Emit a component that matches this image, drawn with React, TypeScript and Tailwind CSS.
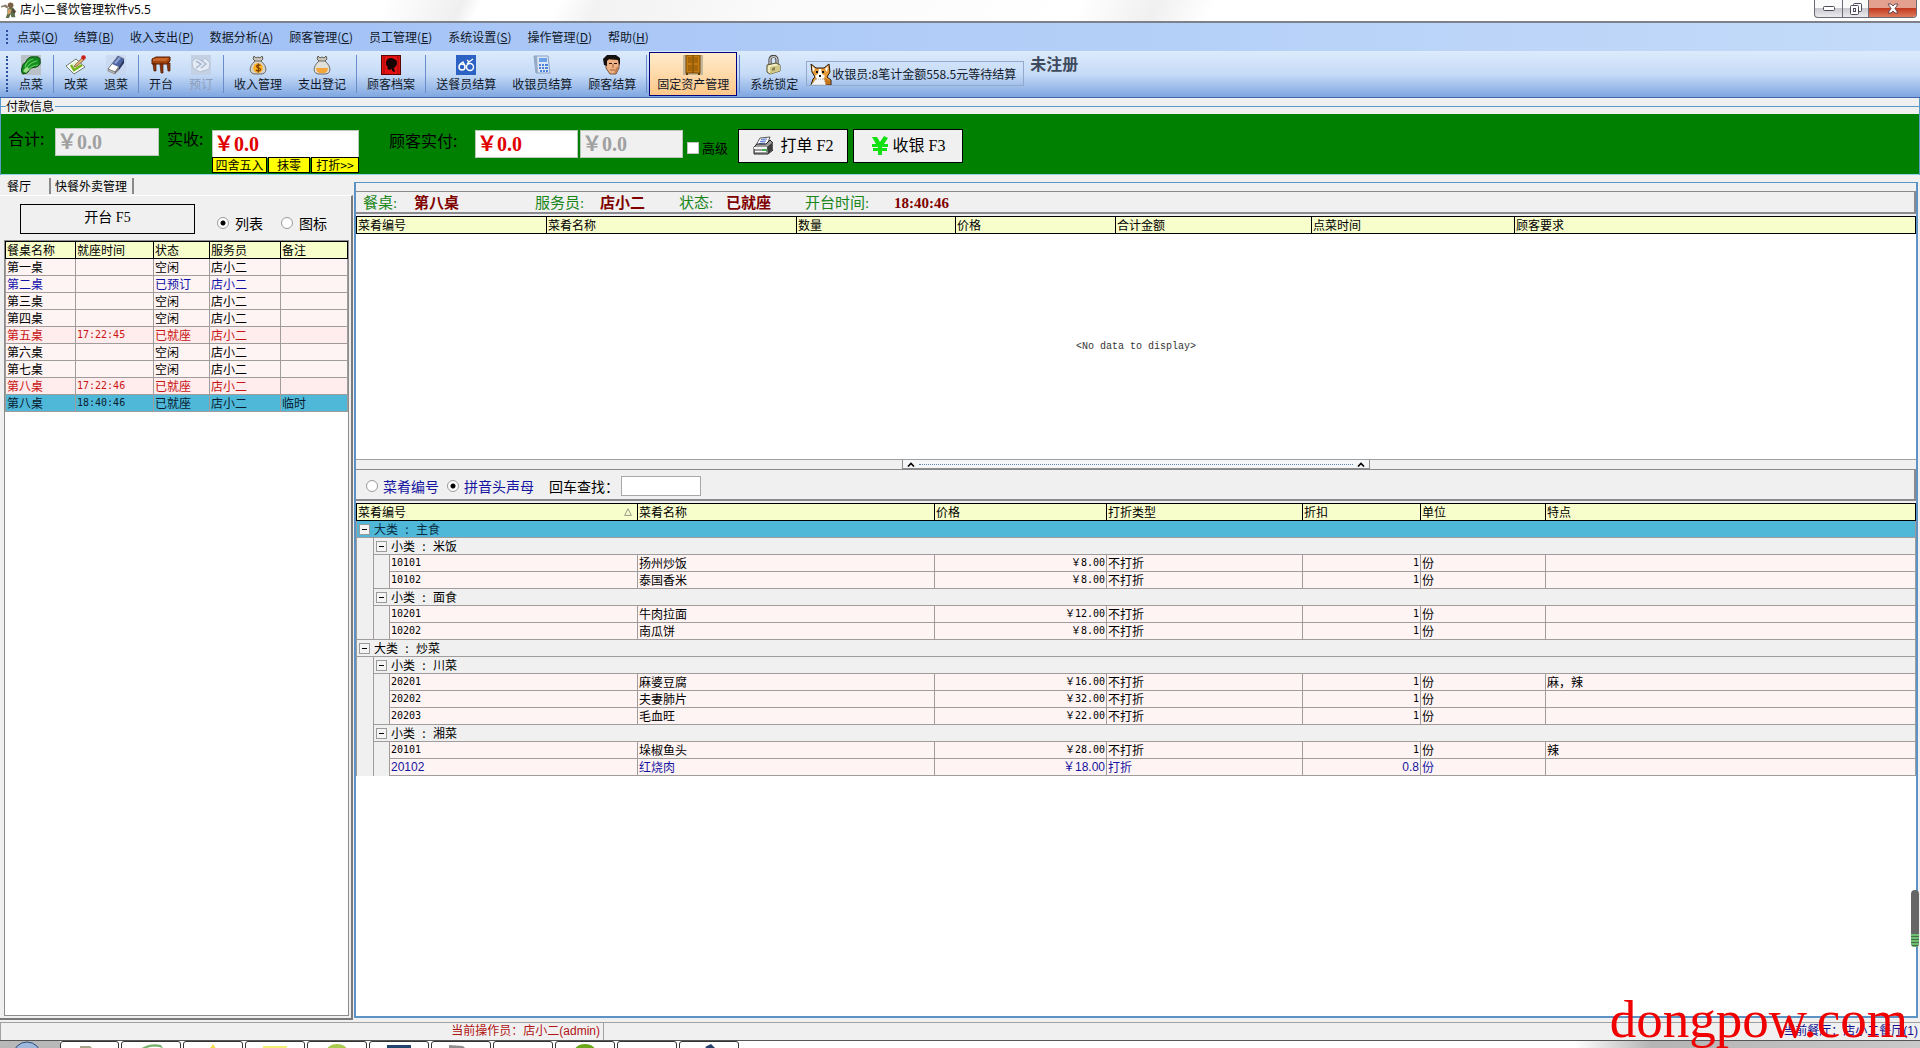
import React from 'react';
import clsx from 'clsx';

/* ---------- icons ---------- */

const Icon = ({ children, size = 20 }: { children: React.ReactNode; size?: number }) => (
  <svg width={size} height={size} viewBox="0 0 20 20" className="block shrink-0" aria-hidden="true">
    {children}
  </svg>
);

const WaiterIcon = () => (
  <Icon size={16}>
    <path d="M0 5l6-2 3 3-1 2-4-2-4 1z" fill="#8a7d6c" />
    <circle cx="12" cy="4" r="3.5" fill="#7a6046" />
    <path d="M8 8l7-1 4 5-2 2 1 5h-5l-1-4-2 5H6l2-6z" fill="#5c6f4a" />
    <path d="M9 9l4 0-1 5-4 2z" fill="#d7a06a" />
    <path d="M14 8l4 4-1 3-3-3z" fill="#574334" />
  </Icon>
);

const VegetableIcon = () => (
  <Icon>
    <rect width="20" height="20" fill="#b9c1c7" />
    <path d="M1 13c0-3 2-5 4-6 1-4 5-6 8-5 4-1 7 1 6 4 1 3-1 5-4 6l-5 1-4 5-4 1-2-3z" fill="#178a22" stroke="#07450d" />
    <path d="M4 12c1-4 4-7 8-8M6 13c2-4 5-6 10-7M8 14c3-3 6-4 9-4" stroke="#5ed45a" strokeWidth="1.2" fill="none" />
    <path d="M5 12l4 2-4 4-3-2z" fill="#9fe08a" />
  </Icon>
);

const EditIcon = () => (
  <Icon>
    <path d="M0 11l10-7 9 8-11 7z" fill="#fff" stroke="#6b7a6b" />
    <path d="M3 11l7-5 6 6-8 5z" fill="#e4f3d0" />
    <path d="M5 10l3 5 8-5" stroke="#76b41a" strokeWidth="2.4" fill="none" />
    <path d="M9 10l7-7 2 2-7 6-3 1z" fill="#e0b078" stroke="#76502c" strokeWidth=".7" />
    <circle cx="17.500" cy="2.500" r="2.300" fill="#c8241c" />
  </Icon>
);

const EraserIcon = () => (
  <Icon>
    <rect width="20" height="20" fill="#c5d4ec" opacity=".6" />
    <path d="M2 14L12 1l6 3-9 13z" fill="#fff" stroke="#555" strokeWidth=".8" />
    <path d="M6 9l6-8 6 3-5 8z" fill="#4c63a0" />
    <path d="M8 8l5-6 2 1-5 6z" fill="#8ea3d4" />
    <path d="M13 12l5-8v4l-5 7z" fill="#26345f" />
    <path d="M9 17l4-5v3l-4 4z" fill="#777" />
    <path d="M2 14l7 3v2l-7-3z" fill="#bbb" stroke="#666" strokeWidth=".5" />
  </Icon>
);

const TableIcon = () => (
  <Icon>
    <path d="M1 4l4-2h14v4l-3 3H1z" fill="#a2420f" stroke="#5b1f05" />
    <path d="M2 4l4-1h12l-3 3H2z" fill="#c9672a" />
    <path d="M2 9h3v7H3zM9 9h3v9h-2zM16 8h3v8h-2z" fill="#8b330a" stroke="#501a03" strokeWidth=".7" />
  </Icon>
);

const BookIcon = () => (
  <Icon>
    <rect width="20" height="20" fill="#c4d1e4" />
    <path d="M1 7l4-4 6 3 3-3 5 5-1 6-9 3-7-4z" fill="#e4ebf5" stroke="#b4bfd0" />
    <path d="M5 6l5 3-5 4M10 5l5 4-5 4" stroke="#aab8cf" fill="none" strokeWidth="1.5" />
  </Icon>
);

const IncomeIcon = () => (
  <Icon>
    <path d="M6 1l2 2 2-1 2 1 2-2 1 3-3 3H8L5 4z" fill="#ccc8bd" stroke="#5f5b52" />
    <path d="M7 6h6c7 6 6 13 0 13H7C1 19 0 12 7 6z" fill="#d5d2c8" stroke="#6b675e" />
    <circle cx="10" cy="13" r="4.8" fill="#ffae1c" />
    <path d="M12.5 10.5c-1-1-4-1-4 .8 0 2 4 1.200 4 3.200 0 1.800-3.500 1.700-4.500.5M10.300 8.500v9" stroke="#7c4300" strokeWidth="1.200" fill="none" />
  </Icon>
);

const ExpenseIcon = () => (
  <Icon>
    <path d="M6 1l2 2 2-1 2 1 2-2 1 3-3 3H8L5 4z" fill="#ccc8bd" stroke="#5f5b52" />
    <path d="M7 6h6c7 6 6 13 0 13H7C1 19 0 12 7 6z" fill="#e0e0da" stroke="#6b675e" />
    <path d="M4 13h12c0 3-2 5-4 5H8c-2 0-4-2-4-5z" fill="#f5a63a" />
  </Icon>
);

const ProfileIcon = () => (
  <Icon>
    <rect x=".5" y=".5" width="19" height="19" fill="#e21212" stroke="#5c0505" />
    <path d="M5 7c1-4 5-5 8-3 3 1 4 4 2 7l-2 2 1 4-3-1v-2l-3 1-2-2 1-1-2-2z" fill="#160404" />
    <path d="M3 1v18M17 1v18" stroke="#a00b0b" />
  </Icon>
);

const BikeIcon = () => (
  <Icon>
    <rect width="20" height="20" fill="#2c62c4" />
    <circle cx="6" cy="12" r="3" fill="none" stroke="#fff" strokeWidth="1.500" />
    <circle cx="14" cy="12" r="3.500" fill="none" stroke="#fff" strokeWidth="1.500" />
    <path d="M4 9l3-2 2 4M11 5l2 2 4-3M11 9l3-3" stroke="#fff" strokeWidth="1.300" fill="none" />
  </Icon>
);

const CalculatorIcon = () => (
  <Icon>
    <path d="M2 1h14l2 17H4z" fill="#dbe7f5" stroke="#8aa2c4" />
    <path d="M2 1l2 17h2L5 1z" fill="#96aac6" />
    <path d="M7 3h8v4H7z" fill="#6ea0e6" />
    <path d="M7 9h2v2H7zM10 9h2v2h-2zM13 9h3v2h-3zM7 12h2v2H7zM10 12h2v2h-2zM13 12h3v2h-3zM8 15h2v2H8zM11 15h2v2h-2zM14 15h2v2h-2z" fill="#4f84d8" />
  </Icon>
);

const ManIcon = () => (
  <Icon>
    <path d="M4 4h13v9l-3 6H8l-4-6z" fill="#eeb183" stroke="#5a3217" strokeWidth=".8" />
    <path d="M2 10L1 4l4-4h9l4 3v7l-1-1-1-4-9-1-2 2v5z" fill="#141010" />
    <path d="M7 8h3v1H7zM12 8h3v1h-3z" fill="#2b150a" />
    <path d="M11 9v4M8 15h5" stroke="#a35e36" fill="none" />
    <path d="M14 13l3-2-2 6-3 2z" fill="#c47f50" />
  </Icon>
);

const CabinetIcon = () => (
  <Icon>
    <rect width="20" height="20" fill="#c4b79c" />
    <rect x="3" y="0" width="14" height="18" fill="#c07a10" stroke="#7a4a06" />
    <path d="M5 2h4v6H5zM11 2h4v6h-4zM5 10h4v6H5zM11 10h4v6h-4z" fill="#a8660a" />
    <path d="M10 0v18" stroke="#6a3f04" />
    <path d="M3 18h2v2H3zM15 18h2v2h-2z" fill="#6a3f04" />
  </Icon>
);

const LockIcon = () => (
  <Icon>
    <path d="M6 11V5c0-5 7-5 7 0v5" stroke="#444" strokeWidth="3.200" fill="none" />
    <path d="M6 11V5c0-4.500 7-4.500 7 0v5" stroke="#cfcfcf" strokeWidth="1.300" fill="none" />
    <path d="M3 10l9-2 4 2v6l-10 3-3-2z" fill="#f0ebc0" stroke="#55502c" />
    <path d="M6 12l10-2v6L6 19z" fill="#d2c988" />
    <path d="M8 13l3-1v3l-3 1z" fill="#8a8250" />
  </Icon>
);

const CorgiIcon = () => (
  <svg width="22" height="22" viewBox="0 0 22 22" className="block shrink-0" aria-hidden="true">
    <path d="M1 1l5 4h8l5-4 1 8-3 5 4 3v5H1l2-6 2-2-3-5z" fill="#e59a3a" stroke="#2a1a0a" />
    <path d="M2 3l3 3-2 3zM18 3l-3 3 2 3z" fill="#fff" />
    <path d="M9 6h2l1 5 3 2-2 3H7l-2-3 3-2z" fill="#fff" />
    <path d="M6 8h2v2H6zM12 8h2v2h-2zM9 12h2v2H9z" fill="#111" />
    <path d="M6 16h8l2 6H1z" fill="#f4f4f4" stroke="#666" strokeWidth=".6" strokeDasharray="1 1" />
    <path d="M15 15l5 3v3h-4z" fill="#c4741c" />
  </svg>
);

const PrinterIcon = () => (
  <Icon>
    <path d="M7 2l10-1-3 8H3z" fill="#fff" stroke="#333" strokeWidth=".8" />
    <path d="M8 3.500l6-.5M7 5.500l6-.5M6 7.500l6-.5" stroke="#5576d0" strokeWidth="1.200" />
    <path d="M1 11l3-3h9l4-4 3 3v7l-5 4H1z" fill="#9a9a9a" stroke="#222" />
    <path d="M1 11h13v2H1z" fill="#f4f4f4" />
    <path d="M14 11l5-4v7l-4 4z" fill="#3c3c3c" />
    <path d="M2 15h11v1H2z" fill="#fff" />
    <path d="M9 13h5v2H9z" fill="#3fae4c" />
  </Icon>
);

const YuanIcon = () => (
  <svg width="18" height="20" viewBox="0 0 18 20" className="block shrink-0" aria-hidden="true">
    <path d="M1 1h5l3 5 4-6 4 2-4 6h4v3h-6v1h5v3h-5v4H7v-4H2v-3h5v-1H1V8h4z" fill="#12e012" />
  </svg>
);

/* ---------- data ---------- */

const menus = [
  ['点菜', 'O'],
  ['结算', 'B'],
  ['收入支出', 'P'],
  ['数据分析', 'A'],
  ['顾客管理', 'C'],
  ['员工管理', 'E'],
  ['系统设置', 'S'],
  ['操作管理', 'D'],
  ['帮助', 'H'],
];

type Tool = { label: string; icon: React.ReactNode; disabled?: boolean; active?: boolean };

const toolGroups: Tool[][] = [
  [{ label: '点菜', icon: <VegetableIcon /> }],
  [
    { label: '改菜', icon: <EditIcon /> },
    { label: '退菜', icon: <EraserIcon /> },
  ],
  [
    { label: '开台', icon: <TableIcon /> },
    { label: '预订', icon: <BookIcon />, disabled: true },
  ],
  [
    { label: '收入管理', icon: <IncomeIcon /> },
    { label: '支出登记', icon: <ExpenseIcon /> },
  ],
  [{ label: '顾客档案', icon: <ProfileIcon /> }],
  [
    { label: '送餐员结算', icon: <BikeIcon /> },
    { label: '收银员结算', icon: <CalculatorIcon /> },
    { label: '顾客结算', icon: <ManIcon /> },
  ],
  [{ label: '固定资产管理', icon: <CabinetIcon />, active: true }],
  [{ label: '系统锁定', icon: <LockIcon /> }],
];

type Seat = { name: string; time?: string; state: string; note?: string; tone?: 'booked' | 'busy' | 'selected' };

const seats: Seat[] = [
  { name: '第一桌', state: '空闲' },
  { name: '第二桌', state: '已预订', tone: 'booked' },
  { name: '第三桌', state: '空闲' },
  { name: '第四桌', state: '空闲' },
  { name: '第五桌', time: '17:22:45', state: '已就座', tone: 'busy' },
  { name: '第六桌', state: '空闲' },
  { name: '第七桌', state: '空闲' },
  { name: '第八桌', time: '17:22:46', state: '已就座', tone: 'busy' },
  { name: '第八桌', time: '18:40:46', state: '已就座', note: '临时', tone: 'selected' },
];

type Dish = { id: string; name: string; price: string; kind: string; rate: string; note?: string; discounted?: boolean };
type SubGroup = { name: string; dishes: Dish[] };
type Group = { name: string; selected?: boolean; subs: SubGroup[] };

const groups: Group[] = [
  {
    name: '主食',
    selected: true,
    subs: [
      {
        name: '米饭',
        dishes: [
          { id: '10101', name: '扬州炒饭', price: '￥8.00', kind: '不打折', rate: '1' },
          { id: '10102', name: '泰国香米', price: '￥8.00', kind: '不打折', rate: '1' },
        ],
      },
      {
        name: '面食',
        dishes: [
          { id: '10201', name: '牛肉拉面', price: '￥12.00', kind: '不打折', rate: '1' },
          { id: '10202', name: '南瓜饼', price: '￥8.00', kind: '不打折', rate: '1' },
        ],
      },
    ],
  },
  {
    name: '炒菜',
    subs: [
      {
        name: '川菜',
        dishes: [
          { id: '20201', name: '麻婆豆腐', price: '￥16.00', kind: '不打折', rate: '1', note: '麻，辣' },
          { id: '20202', name: '夫妻肺片', price: '￥32.00', kind: '不打折', rate: '1' },
          { id: '20203', name: '毛血旺', price: '￥22.00', kind: '不打折', rate: '1' },
        ],
      },
      {
        name: '湘菜',
        dishes: [
          { id: '20101', name: '垛椒鱼头', price: '￥28.00', kind: '不打折', rate: '1', note: '辣' },
          { id: '20102', name: '红烧肉', price: '￥18.00', kind: '打折', rate: '0.8', discounted: true },
        ],
      },
    ],
  },
];

/* ---------- small parts ---------- */

const Grip = () => <div className="w-[2px] border-l-2 border-dotted border-[#2a4f9c]" />;

const th = 'h-[17px] border border-black bg-[#f8fdcc] p-0 px-px text-left font-normal leading-4 whitespace-nowrap';
const td = 'h-[17px] border border-[#a09c9c] p-0 px-px leading-4 whitespace-nowrap overflow-hidden';
const mono = "font-['DejaVu_Sans_Mono','Noto_Sans_CJK_SC',monospace] text-[10px]";
const arial = "font-['Liberation_Sans','Noto_Sans_CJK_SC',sans-serif]";
const radio =
  'm-0 size-3 shrink-0 appearance-none rounded-full border border-[#9a9a9a] bg-white checked:bg-[radial-gradient(circle,#000_2px,#fff_3px)]';

const Toggle = ({ label }: { label: string }) => (
  <button
    type="button"
    aria-label={label}
    className="flex size-[11px] items-center justify-center border border-[#9a9a9a] bg-[#f4f4f4]"
  >
    <span className="h-px w-[5px] bg-black" />
  </button>
);

const GroupLabel = ({ kind, name }: { kind: string; name: string }) => (
  <div className="flex items-center pl-px">
    <Toggle label={name} />
    <span className="ml-1">{kind}</span>
    <span className="w-[18px] text-center">:</span>
    <span>{name}</span>
  </div>
);

const MoneyInput = ({ label, readOnly, className }: { label: string; readOnly?: boolean; className: string }) => (
  <input
    aria-label={label}
    defaultValue="￥0.0"
    readOnly={readOnly}
    className={clsx(
      "h-7 shrink-0 border border-[#b9c9b9] px-px pb-[3px] font-['Liberation_Serif','Noto_Sans_CJK_SC',serif] text-xl leading-5 font-bold outline-none",
      readOnly ? 'bg-[#f0f0f0] text-[#a0a0a0]' : 'bg-white text-[#e00000]',
      className
    )}
  />
);

/* ---------- sections ---------- */

const TitleBar = () => (
  <header className="flex h-[23px] shrink-0 items-start justify-between border-b-2 border-[#7d828a] bg-[linear-gradient(115deg,#fff_0%,#fff_20%,#efefef_24%,#fff_25%,#fff_29%,#f2f2f2_31%,#fafafa_40%,#fff_56%,#f0f0f0_60%,#fff_63%,#fff_100%)] pr-[3px] pl-px">
    <div className="flex items-center gap-[3px] pt-px">
      <WaiterIcon />
      <h1 className="font-['Open_Sans','Noto_Sans_CJK_SC',sans-serif] text-xs leading-[18px] text-black">店小二餐饮管理软件v5.5</h1>
    </div>
    <div className="flex h-[18px] overflow-hidden rounded-b-[4px] border border-t-0 border-[#6b6b75] bg-[linear-gradient(#fafafa_50%,#c8c8ce_50%,#ececf0)]">
      <button type="button" aria-label="最小化" className="flex w-7 items-center justify-center border-r border-[#6b6b75]">
        <svg width="12" height="5" viewBox="0 0 12 5"><rect x=".5" y=".5" width="11" height="4" rx="1" fill="#fff" stroke="#4a4a5a" /></svg>
      </button>
      <button type="button" aria-label="还原" className="flex w-[26px] items-center justify-center border-r border-[#6b6b75]">
        <svg width="12" height="12" viewBox="0 0 12 12" fill="#fff" stroke="#4a4a5a">
          <rect x="3.500" y=".5" width="8" height="8" rx="1" />
          <rect x=".5" y="2.500" width="8" height="9" rx="1" />
          <rect x="3.500" y="5.500" width="2" height="3" />
        </svg>
      </button>
      <button type="button" aria-label="关闭" className="flex w-[47px] items-center justify-center bg-[linear-gradient(#e3a08e_45%,#c43a1f_50%,#de7a5c)]">
        <svg width="12" height="11" viewBox="0 0 12 11"><path d="M1 1h3l2 2 2-2h3L8 5.500 11 10H8L6 8l-2 2H1l3-4.500z" fill="#fff" stroke="#5a4048" strokeWidth=".9" /></svg>
      </button>
    </div>
  </header>
);

const MenuBar = () => (
  <nav className="flex h-7 shrink-0 items-center bg-linear-to-r from-[#9ebef5] to-[#c4dbf9] pl-[6px]">
    <div className="mr-px flex h-[14px]"><Grip /></div>
    <div className="flex">
      {menus.map(([label, key]) => (
        <button key={key} type="button" className="px-2 text-xs text-[#101828]">
          {label}(<u>{key}</u>)
        </button>
      ))}
    </div>
  </nav>
);

const Toolbar = () => (
  <div className="flex h-[47px] shrink-0 border-b border-[#3f66a8] bg-[linear-gradient(#dcebfc,#c6dbf7_50%,#7fa6e1)] pl-[6px]">
    <div className="mr-[3px] flex py-[5px]"><Grip /></div>
    {toolGroups.map((group, i) => (
      <div key={i} className="flex items-start">
        {i > 0 && <div className="mx-[2px] my-1 w-px self-stretch bg-[#6a8ccb]" />}
        {group.map((tool) => (
          <button
            key={tool.label}
            type="button"
            disabled={tool.disabled}
            className={clsx(
              'mt-px flex h-11 flex-col items-center gap-px border px-[7px] pt-[2px] text-xs whitespace-nowrap',
              tool.active ? 'border-[#000080] bg-linear-to-b from-[#ffeccb] to-[#ffc788]' : 'border-transparent',
              tool.disabled ? 'text-[#8d9cb8]' : 'text-[#101828]'
            )}
          >
            {tool.icon}
            <span className="leading-4">{tool.label}</span>
          </button>
        ))}
      </div>
    ))}
    <button type="button" className="mt-[10px] flex h-[25px] w-[218px] items-center border border-[#93a9cb] pl-[3px] text-xs whitespace-nowrap text-[#101828]">
      <CorgiIcon />
      <span className="leading-4">收银员:8笔计金额558.5元等待结算</span>
    </button>
    <strong className="ml-[6px] text-base leading-6 text-[#3f4a5c]">未注册</strong>
  </div>
);

const PaymentPanel = () => (
  <section className="shrink-0 border-x border-[#5b9bc9] text-black">
    <div className="flex h-4 items-center">
      <span className="w-[5px] border-t border-[#5b9bc9]" />
      <h2 className="mr-px text-xs leading-[14px]">付款信息</h2>
      <span className="flex-1 border-t border-[#5b9bc9]" />
    </div>
    <div className="flex h-[60px] items-start bg-[#008000] pl-[7px]">
      <span className="mt-3 w-[47px] leading-6">合计:</span>
      <MoneyInput label="合计" readOnly className="mt-[14px] w-[104px]" />
      <span className="mt-3 ml-2 w-[45px] leading-6">实收:</span>
      <div className="mt-4 w-[147px]">
        <MoneyInput label="实收" className="block w-full" />
        <div className="-mt-px flex gap-px text-xs">
          <button type="button" className="h-4 w-[55px] border border-black bg-[#ffff00] leading-[14px] whitespace-nowrap">四舍五入</button>
          <button type="button" className="h-4 w-[42px] border border-black bg-[#ffff00] leading-[14px]">抹零</button>
          <button type="button" className="h-4 flex-1 border border-black bg-[#ffff00] leading-[14px] whitespace-nowrap">打折&gt;&gt;</button>
        </div>
      </div>
      <span className="mt-[14px] ml-[30px] w-[86px] leading-6">顾客实付:</span>
      <MoneyInput label="顾客实付" className="mt-4 w-[103px]" />
      <MoneyInput label="找零" readOnly className="mt-4 ml-[2px] w-[103px]" />
      <label className="mt-[26px] ml-1 flex items-center gap-[3px] text-[13px] leading-4">
        <input type="checkbox" className="size-3 appearance-none border border-[#c0c0c0] bg-white checked:bg-black" />
        高级
      </label>
      <button type="button" className="mt-[15px] ml-[10px] flex h-[34px] w-[110px] items-center justify-center gap-2 border border-black bg-[#f0f0f0]">
        <PrinterIcon />
        <span className="font-['Liberation_Serif','Noto_Sans_CJK_SC',serif] text-base">打单 F2</span>
      </button>
      <button type="button" className="mt-[15px] ml-[5px] flex h-[34px] w-[110px] items-center justify-center gap-1 border border-black bg-[#f0f0f0]">
        <YuanIcon />
        <span className="font-['Liberation_Serif','Noto_Sans_CJK_SC',serif] text-base">收银 F3</span>
      </button>
    </div>
    <div className="h-px bg-[#8fd6ef]" />
  </section>
);

const SeatPanel = () => (
  <aside className="flex w-[353px] shrink-0 flex-col pt-[3px] text-xs">
    <div role="tablist" className="flex h-[17px] items-start pl-[7px]">
      <button type="button" role="tab" aria-selected="true" className="h-4 w-11 border-r-2 border-[#8a8a8a] text-left leading-[14px]">餐厅</button>
      <button type="button" role="tab" aria-selected="false" className="h-4 border-r-2 border-[#8a8a8a] pr-[5px] pl-1 leading-4">快餐外卖管理</button>
    </div>
    <div className="flex min-h-0 flex-1 flex-col border-r-2 border-b-2 border-[#7a7a7a] border-t border-t-white pr-[2px] pb-[2px] pl-1">
      <div className="flex h-11 items-start">
        <button type="button" className="mt-2 ml-4 h-[30px] w-[175px] border border-black pb-[2px] font-['Liberation_Serif','Noto_Sans_CJK_SC',serif] text-sm">
          开台 F5
        </button>
        <label className="mt-[17px] ml-[22px] flex items-center gap-[6px] text-sm leading-5">
          <input type="radio" name="view" defaultChecked className={radio} />
          列表
        </label>
        <label className="mt-[17px] ml-[18px] flex items-center gap-[6px] text-sm leading-5">
          <input type="radio" name="view" className={radio} />
          图标
        </label>
      </div>
      <div className="min-h-0 flex-1 border border-[#8c8c8c] bg-white">
        <table className="w-full table-fixed border-collapse">
          <colgroup>
            <col className="w-[70px]" />
            <col className="w-[78px]" />
            <col className="w-[56px]" />
            <col className="w-[71px]" />
            <col />
          </colgroup>
          <thead>
            <tr>
              {['餐桌名称', '就座时间', '状态', '服务员', '备注'].map((h) => (
                <th key={h} className={th}>{h}</th>
              ))}
            </tr>
          </thead>
          <tbody>
            {seats.map((s, i) => (
              <tr
                key={i}
                className={clsx(
                  s.tone === 'busy' && 'bg-[#ffecec] text-[#c81414]',
                  s.tone === 'booked' && 'bg-[#fff4f4] text-[#1010a8]',
                  s.tone === 'selected' && 'bg-[#4fb8d9] text-[#0a1c30]',
                  !s.tone && 'bg-[#fff4f4] text-black'
                )}
              >
                <td className={clsx(td, s.tone === 'selected' && 'border-[#4fb8d9]')}>{s.name}</td>
                <td className={clsx(td, mono, s.tone === 'selected' && 'border-[#4fb8d9]')}>{s.time}</td>
                <td className={clsx(td, s.tone === 'selected' && 'border-[#4fb8d9]')}>{s.state}</td>
                <td className={clsx(td, s.tone === 'selected' && 'border-[#4fb8d9]')}>店小二</td>
                <td className={clsx(td, s.tone === 'selected' && 'border-[#4fb8d9]')}>{s.note}</td>
              </tr>
            ))}
          </tbody>
        </table>
      </div>
    </div>
  </aside>
);

const Info = ({ label, value, className, labelClass }: { label: string; value: string; className?: string; labelClass: string }) => (
  <div className={clsx('flex shrink-0', className)}>
    <dt className={clsx('shrink-0 text-[#1a861a]', labelClass)}>{label}</dt>
    <dd className="font-bold text-[#800000]">{value}</dd>
  </div>
);

const OrderPanel = () => (
  <section className="flex h-[277px] shrink-0 flex-col">
    <dl className="mt-2 flex h-[23px] items-center border-t border-r-2 border-b-2 border-[#8a8a8e] pt-px pl-[7px] font-['Liberation_Serif','Noto_Sans_CJK_SC',serif] text-[15px] leading-5">
      <Info label="餐桌:" value="第八桌" className="w-[172px]" labelClass="w-[51px]" />
      <Info label="服务员:" value="店小二" className="w-[144px]" labelClass="w-[65px]" />
      <Info label="状态:" value="已就座" className="w-[126px]" labelClass="w-[47px]" />
      <Info label="开台时间:" value="18:40:46" labelClass="w-[89px]" />
    </dl>
    <div className="mt-[2px] flex min-h-0 flex-1 flex-col border-b border-[#a0a0a0] bg-white">
      <table className="w-full table-fixed border-collapse text-xs">
        <colgroup>
          <col className="w-[190px]" />
          <col className="w-[250px]" />
          <col className="w-[159px]" />
          <col className="w-[160px]" />
          <col className="w-[196px]" />
          <col className="w-[203px]" />
          <col />
        </colgroup>
        <thead>
          <tr>
            {['菜肴编号', '菜肴名称', '数量', '价格', '合计金额', '点菜时间', '顾客要求'].map((h) => (
              <th key={h} className={th}>{h}</th>
            ))}
          </tr>
        </thead>
      </table>
      <div className="flex flex-1 items-center justify-center">
        <span className="font-['Liberation_Mono',monospace] text-[10px] text-[#333]">&lt;No data to display&gt;</span>
      </div>
    </div>
  </section>
);

const Caret = () => (
  <svg width="8" height="5" viewBox="0 0 8 5" aria-hidden="true"><path d="M1 4.500L4 1.500l3 3" stroke="#000" strokeWidth="1.600" fill="none" /></svg>
);

const Splitter = () => (
  <div className="flex h-[9px] shrink-0 justify-center">
    <div className="flex w-[30%] items-center gap-1 border-x border-b border-[#8c8c8c] bg-[#f4f6f8] px-1">
      <Caret />
      <span className="flex-1 border-t border-dotted border-[#5b83b8]" />
      <Caret />
    </div>
  </div>
);

const SearchBar = () => (
  <form className="flex h-8 shrink-0 items-center border-t border-r-2 border-b-2 border-[#8a8a8e] pt-[2px] pl-[10px] text-sm">
    <label className="flex items-center gap-[5px] text-[#1414a0]">
      <input type="radio" name="by" className={radio} />
      菜肴编号
    </label>
    <label className="ml-2 flex items-center gap-[5px] text-[#1414a0]">
      <input type="radio" name="by" defaultChecked className={radio} />
      拼音头声母
    </label>
    <label className="ml-[15px] flex items-center gap-[2px]">
      回车查找：
      <input type="text" className="h-5 w-20 border border-[#a8a8a8] bg-white px-1 outline-none" />
    </label>
  </form>
);

const indent = 'h-[17px] border-x border-[#a09c9c] bg-[#f0f0f0] p-0';

const DishTable = () => (
  <div className="mt-[2px] min-h-0 flex-1 overflow-hidden bg-white">
    <table className="w-full table-fixed border-collapse text-xs text-black">
      <colgroup>
        <col className="w-[17px]" />
        <col className="w-4" />
        <col className="w-[248px]" />
        <col className="w-[297px]" />
        <col className="w-[172px]" />
        <col className="w-[196px]" />
        <col className="w-[118px]" />
        <col className="w-[125px]" />
        <col />
      </colgroup>
      <thead>
        <tr>
          <th colSpan={3} className={th}>
            <div className="flex items-center justify-between pr-1">
              菜肴编号
              <svg width="8" height="8" viewBox="0 0 8 8" aria-hidden="true"><path d="M4 .8L7.400 7.400H.6z" fill="none" stroke="#9a9a8a" /></svg>
            </div>
          </th>
          {['菜肴名称', '价格', '打折类型', '折扣', '单位', '特点'].map((h) => (
            <th key={h} className={th}>{h}</th>
          ))}
        </tr>
      </thead>
      <tbody>
        {groups.map((g) => (
          <React.Fragment key={g.name}>
            <tr className={g.selected ? 'bg-[#4fb8d9] text-[#0a2c40]' : 'bg-[#f0f0f0]'}>
              <td colSpan={9} className={td}><GroupLabel kind="大类" name={g.name} /></td>
            </tr>
            {g.subs.map((sub) => (
              <React.Fragment key={sub.name}>
                <tr className="bg-[#f0f0f0]">
                  <td className={indent} />
                  <td colSpan={8} className={td}><GroupLabel kind="小类" name={sub.name} /></td>
                </tr>
                {sub.dishes.map((d) => (
                  <tr key={d.id} className={clsx('bg-[#fff4f4]', d.discounted && 'text-[#1414a0]')}>
                    <td className={indent} />
                    <td className={indent} />
                    <td className={clsx(td, d.discounted ? arial : mono)}>{d.id}</td>
                    <td className={td}>{d.name}</td>
                    <td className={clsx(td, 'text-right', d.discounted ? arial : mono)}>{d.price}</td>
                    <td className={td}>{d.kind}</td>
                    <td className={clsx(td, 'text-right', d.discounted ? arial : mono)}>{d.rate}</td>
                    <td className={td}>份</td>
                    <td className={td}>{d.note}</td>
                  </tr>
                ))}
              </React.Fragment>
            ))}
          </React.Fragment>
        ))}
      </tbody>
    </table>
  </div>
);

const StatusBar = () => (
  <footer className="flex h-[18px] shrink-0 border-t border-[#a0a0a0] font-['Liberation_Sans','Noto_Sans_CJK_SC',sans-serif] text-xs leading-4 whitespace-nowrap">
    <div className="w-[604px] border-r border-l border-[#a0a0a0] pr-[3px] text-right text-[#b01414]">当前操作员：店小二(admin)</div>
    <div className="flex-1 pr-[2px] text-right text-[#101090]">当前餐厅：店小二餐厅(1)</div>
  </footer>
);

// only the top edge of each task button is visible
const tasks = [
  { w: 'w-[59px]', fill: '#a8a48a', d: 'M2 6V2h10l2 2v2z' },
  { w: 'w-[60px]', fill: '#79b26c', d: 'M0 6C6 1 14-1 22 1l2 3-4-1C14 2 8 3 4 6z' },
  { w: 'w-[60px]', fill: '#efe04c', d: 'M8 6l4-6 4 6z' },
  { w: 'w-[60px]', fill: '#f3ef74', d: 'M0 2h24v4H0z' },
  { w: 'w-[60px]', fill: '#a9cc4e', d: 'M1 6C4 1 8 0 12 0s8 1 11 6z' },
  { w: 'w-[60px]', fill: '#21456f', d: 'M0 1h24v5H0z' },
  { w: 'w-[60px]', fill: '#8f8f8f', d: 'M0 1l14 1 4 4h-4l-3-2H0z' },
  { w: 'w-[60px]', fill: '#ffffff', d: 'M0 1h24v5H0z' },
  { w: 'w-[60px]', fill: '#6ba81a', d: 'M1 6C4 1 8 0 12 0s8 1 11 6z' },
  { w: 'w-[60px]', fill: '#ffffff', d: 'M0 1h24v5H0z' },
  { w: 'w-[60px]', fill: '#26406c', d: 'M8 3l6-3 6 6H12z' },
];

const TaskBar = () => (
  <div className="flex h-2 shrink-0 gap-[2px] overflow-hidden border-t border-[#555] bg-[linear-gradient(90deg,#b8b8b8_0,#b8b8b8_60px,#fff_60px,#fff_82%,#b4b4b4_86%,#c9c9c9)]">
    <svg width="58" height="7" viewBox="0 0 58 7" className="shrink-0"><circle cx="27" cy="15" r="14" fill="#9fb9dc" stroke="#2a4a78" /></svg>
    {tasks.map((t, i) => (
      <button key={i} type="button" aria-label={`任务 ${i + 1}`} className={clsx('flex h-3 shrink-0 justify-center rounded-t-[3px] border border-[#333] bg-white pt-[2px]', t.w)}>
        <svg width="24" height="6" viewBox="0 0 24 6"><path d={t.d} fill={t.fill} /></svg>
      </button>
    ))}
  </div>
);

const App = () => (
  <div className="relative flex h-screen flex-col overflow-hidden bg-[#f0f0f0] font-['Noto_Sans_CJK_SC',sans-serif] text-black">
    <TitleBar />
    <MenuBar />
    <Toolbar />
    <PaymentPanel />
    <main className="flex min-h-0 flex-1 gap-px pb-[2px]">
      <SeatPanel />
      <div className="mt-[7px] mr-[2px] mb-[2px] flex min-w-0 flex-1 flex-col border-2 border-t border-[#5b93c4]">
        <OrderPanel />
        <Splitter />
        <SearchBar />
        <DishTable />
      </div>
    </main>
    <StatusBar />
    <TaskBar />
    <div className="absolute right-px bottom-[101px] flex h-[57px] w-2 items-end overflow-hidden rounded-full bg-[#666]">
      <span className="h-[13px] w-full bg-[repeating-linear-gradient(#6cc070_0_2px,#4a6a4c_2px_3px)]" />
    </div>
    <div className="pointer-events-none absolute right-3 bottom-0 font-['Liberation_Serif',serif] text-[53px] leading-[58px] text-[#f00000]">
      dongpow.com
    </div>
  </div>
);

export default App;
